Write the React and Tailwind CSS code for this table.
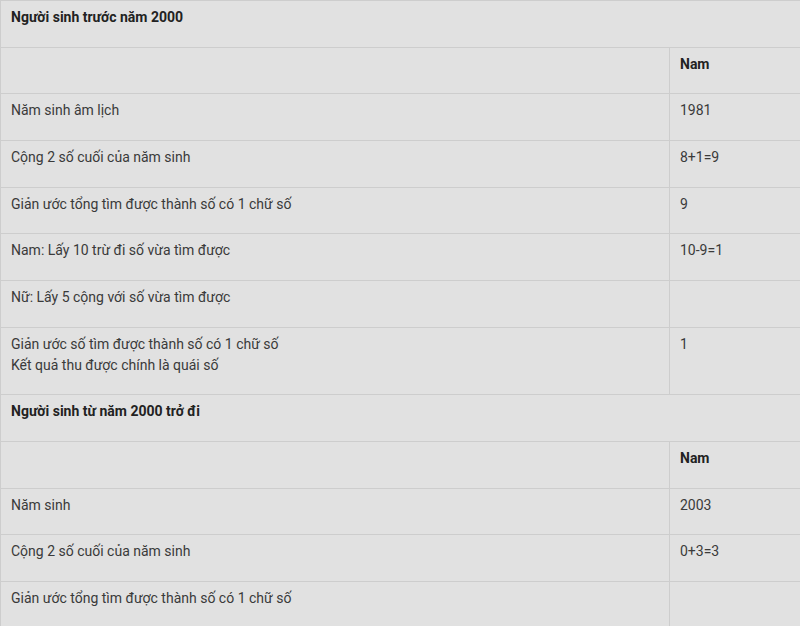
import React from "react";

const rows1 = [
  ["Năm sinh âm lịch", "1981"],
  ["Cộng 2 số cuối của năm sinh", "8+1=9"],
  ["Giản ước tổng tìm được thành số có 1 chữ số", "9"],
  ["Nam: Lấy 10 trừ đi số vừa tìm được", "10-9=1"],
  ["Nữ: Lấy 5 cộng với số vừa tìm được", ""],
];

const rows2 = [
  ["Năm sinh", "2003"],
  ["Cộng 2 số cuối của năm sinh", "0+3=3"],
  ["Giản ước tổng tìm được thành số có 1 chữ số", ""],
];

const td = "border border-[#cdcdcd] align-top pl-[10px] pr-[10px] pt-[6px] pb-[18.67px]";

function Row({ a, b }) {
  return (
    <tr>
      <td className={td}>{a}</td>
      <td className={td}>{b}</td>
    </tr>
  );
}

function Section({ title, rows, extra }) {
  return (
    <>
      <tr>
        <td colSpan={2} className={td + " font-bold text-[#222]"}>{title}</td>
      </tr>
      <tr>
        <td className={td}></td>
        <td className={td + " font-bold text-[#222]"}>Nam</td>
      </tr>
      {rows.map((r, i) => (
        <Row key={i} a={r[0]} b={r[1]} />
      ))}
      {extra}
    </>
  );
}

export default function App() {
  return (
    <div
      className="w-[800px] h-[626px] overflow-hidden bg-[#e1e1e1] text-[14px] leading-[21px] text-[#3a3a3a]"
      style={{ fontFamily: "Roboto, 'Noto Sans', sans-serif" }}
    >
      <table className="w-[801px] border-collapse bg-[#e1e1e1] mt-[0px]">
        <colgroup>
          <col className="w-[669px]" />
          <col />
        </colgroup>
        <tbody>
          <Section
            title="Người sinh trước năm 2000"
            rows={rows1}
            extra={
              <tr>
                <td className={td}>
                  Giản ước số tìm được thành số có 1 chữ số
                  <br />
                  Kết quả thu được chính là quái số
                </td>
                <td className={td}>1</td>
              </tr>
            }
          />
          <Section title="Người sinh từ năm 2000 trở đi" rows={rows2} />
        </tbody>
      </table>
    </div>
  );
}
